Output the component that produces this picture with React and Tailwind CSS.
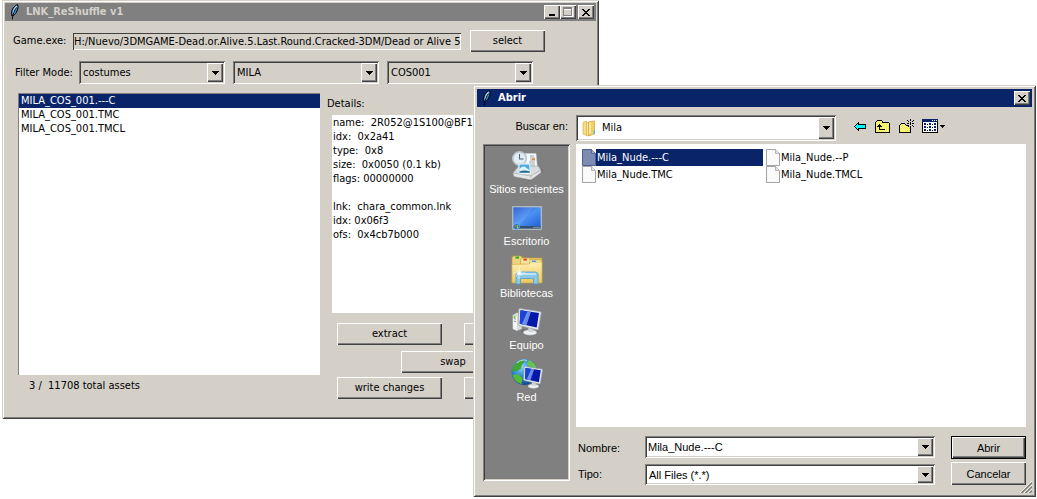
import React, { useState } from "react";

const TAHOMA = "font-['DejaVu_Sans_Condensed','Noto_Sans',sans-serif]";
const SHELL = "font-['Liberation_Sans',Arial,sans-serif]";

const RAISED =
  "bg-[#d4d0c8] shadow-[inset_1px_1px_0_#ffffff,inset_-1px_-1px_0_#404040,inset_-2px_-2px_0_#808080]";
const SUNKEN =
  "shadow-[inset_1px_1px_0_#808080,inset_-1px_-1px_0_#ffffff,inset_2px_2px_0_#404040,inset_-2px_-2px_0_#d4d0c8]";
const FRAME =
  "bg-[#d4d0c8] shadow-[inset_1px_1px_0_#d4d0c8,inset_-1px_-1px_0_#404040,inset_2px_2px_0_#ffffff,inset_-2px_-2px_0_#808080]";

const PALETTE = { K: "#000000", C: "#00ffff", Y: "#f8ee3c", W: "#f6f2a8", N: "#0a246a", H: "#ffffff", G: "#808080" };

function PixelIcon({ rows, className = "" }) {
  return (
    <svg
      width={rows[0].length}
      height={rows.length}
      viewBox={`0 0 ${rows[0].length} ${rows.length}`}
      shapeRendering="crispEdges"
      className={className}
      aria-hidden="true"
    >
      {rows.flatMap((row, y) =>
        [...row].map((c, x) =>
          PALETTE[c] ? <rect key={`${x}-${y}`} x={x} y={y} width="1" height="1" fill={PALETTE[c]} /> : null
        )
      )}
    </svg>
  );
}

const DOWN = ["KKKKKKK", ".KKKKK.", "..KKK..", "...K..."];
const SMALL_DOWN = ["KKKKK", ".KKK.", "..K.."];
const CLOSE = ["KK....KK", ".KK..KK.", "..KKKK..", "...KK...", "..KKKK..", ".KK..KK.", "KK....KK"];
const MINIMIZE = ["......", "......", "......", "......", "......", "KKKKKK", "KKKKKK"];
const MAXIMIZE = [
  "GGGGGGGGG.",
  "GGGGGGGGGH",
  "GHHHHHHHGH",
  "G.......GH",
  "G.......GH",
  "G.......GH",
  "G.......GH",
  "G.......GH",
  "GGGGGGGGGH",
  ".HHHHHHHHH",
];
const BACK = [
  "....K.......",
  "...KK.......",
  "..KCKKKKKKKK",
  ".KCCCCCCCCCK",
  "KCCCCCCCCCCK",
  ".KCCCCCCCCCK",
  "..KCKKKKKKKK",
  "...KK.......",
  "....K.......",
];
const UP = [
  "..KKKKK........",
  ".KYWYWYK.......",
  "KYWYWYWKKKKKKK.",
  "KWYWYWYWYWYWYWK",
  "KYWYKYWYWYWYWYK",
  "KWYKKKYWYWYWYWK",
  "KYKKKKKYWYWYWYK",
  "KWYWKWYWYWYWYWK",
  "KYWYKYWYWYWYWYK",
  "KWYWKKKKKKWYWYK",
  "KYWYWYWYWYWYWYK",
  "KWYWYWYWYWYWYWK",
  "KKKKKKKKKKKKKKK",
];
const NEW_FOLDER = [
  "...........K....",
  "........K..K..K.",
  ".........K...K..",
  "...........K....",
  "..KKKK..KK.K.KK.",
  ".KYWYWK....K....",
  "KYWYWYWKKK...K..",
  "KWYWYWYWYK.K..K.",
  "KYWYWYWYWYWK....",
  "KWYWYWYWYWYK....",
  "KYWYWYWYWYWK....",
  "KWYWYWYWYWYK....",
  "KYWYWYWYWYWK....",
  "KKKKKKKKKKKK....",
];
const VIEWS = [
  "NNNNNNNNNNNNNNNN",
  "NNNNNNNNNNHNHNHN",
  "NNNNNNNNNNNNNNNN",
  "KHHHHHHHHHHHHHHK",
  "KHNNHHHNNHHHNNHK",
  "KHNNHKHNNHKHNNHK",
  "KHHHHHHHHHHHHHHK",
  "KHNNHHHNNHHHNNHK",
  "KHNNHKHNNHKHNNHK",
  "KHHHHHHHHHHHHHHK",
  "KHNNHHHNNHHHNNHK",
  "KHNNHKHNNHKHNNHK",
  "KHHHHHHHHHHHHHHK",
  "KKKKKKKKKKKKKKKK",
];

function Feather() {
  return (
    <svg width="16" height="16" viewBox="0 0 16 16" aria-hidden="true">
      <path d="M10.5 .6C7.8 1.500 5.600 4 5 6.600c-.5 1.800-.7 3.400-.2 5.200l1.500-.3c2-1.200 3-2.700 3.700-4.600C11 4.500 11.500 2.500 10.500 .6Z" fill="#3f86c8" stroke="#000" strokeWidth="1" />
      <path d="M9.800 2C8 3.700 6.700 6 6.200 9" fill="none" stroke="#b9e0fa" strokeWidth="1.300" />
      <path d="M9.500 3.500C7.500 6 5.800 10 5.300 15.500" fill="none" stroke="#000" strokeWidth=".9" />
    </svg>
  );
}

function FolderIcon() {
  return (
    <svg width="15" height="17" viewBox="0 0 15 17" aria-hidden="true">
      <path d="M1 2.500 4.500 1v14.500L1 14Z" fill="#f5dd80" stroke="#d5b048" strokeWidth=".7" />
      <path d="M4.500 2.500h4V15l-4 .8Z" fill="#f9e9a0" stroke="#d5b048" strokeWidth=".6" />
      <path d="M6.500 1.800 12.500 1v13l-6 2Z" fill="#efd067" stroke="#cda53a" strokeWidth=".7" />
      <path d="M8 2.500v11" stroke="#fff6c8" strokeWidth="1.200" />
      <path d="M11.500 10.500h1.500v3.500h-1.500Z" fill="#62b5e8" />
    </svg>
  );
}

function FileIcon({ selected }) {
  return (
    <svg width="14" height="17" viewBox="0 0 14 17" className="shrink-0" aria-hidden="true">
      <path d="M.5 .5h9L13.500 4.500v12H.5Z" fill={selected ? "#7d8ab2" : "#fafafa"} stroke={selected ? "#4f5f92" : "#a3a3a3"} />
      <path d="M9.500 .5v4h4" fill={selected ? "#a3acc8" : "#e6e6e6"} stroke={selected ? "#5c6a99" : "#b4b4b4"} />
    </svg>
  );
}

function RecentIcon() {
  return (
    <svg width="32" height="32" viewBox="0 0 32 32" aria-hidden="true">
      <path d="M8 28 29 18l3 2-12 11Z" fill="#444" opacity=".45" />
      <path d="M12 3.500h13l1.500 15H14Z" fill="#f7fafc" stroke="#c4ccd2" strokeWidth=".6" />
      <path d="M19 6h4M19 8h5M19 10h2M18 12h6M19 14h5M19 16h5" stroke="#8794a2" strokeWidth=".8" />
      <path d="M21 8.500h3v2h-3Z" fill="#d98c3c" />
      <circle cx="8.500" cy="8.500" r="6.800" fill="#dfe9ef" stroke="#b4c1ca" strokeWidth="1.400" />
      <circle cx="8.500" cy="8.500" r="5.200" fill="#e4edf2" />
      <path d="M8.500 4v5h4" fill="none" stroke="#52677a" strokeWidth="1.100" />
      <path d="M2 23 7 17l20-1 3 4-10 7-17-2Z" fill="#d9dcde" stroke="#a5a9ac" strokeWidth=".6" />
      <path d="M7.500 13.500h11.500l1 10.500-12.500 .5Z" fill="#fff" stroke="#ccd6dc" strokeWidth=".5" />
      <path d="M8.500 14.500h9.700l.7 8.200H8.500Z" fill="#4aa9e6" />
      <path d="M8.500 19c3-3 5-3 7-1l3 2 .4 2.700H8.500Z" fill="#e2f2fb" />
      <path d="M8.500 21.500c4-1.500 7-1 10.300 0v1.200H8.500Z" fill="#1f6f93" />
      <path d="M2 23 20 26l10-6v2.500L20 30 3 26.500Z" fill="#e4e6e7" stroke="#9fa3a6" strokeWidth=".6" />
      <path d="M20 26v3.500" stroke="#b5b8ba" strokeWidth=".8" />
    </svg>
  );
}

function DesktopIcon() {
  return (
    <svg width="32" height="32" viewBox="0 0 32 32" aria-hidden="true">
      <defs>
        <linearGradient id="desk" x1="0" y1="0" x2="1" y2="1">
          <stop offset="0" stopColor="#1d56d0" />
          <stop offset=".5" stopColor="#4a92f2" />
          <stop offset="1" stopColor="#2260d6" />
        </linearGradient>
      </defs>
      <rect x="1" y="4" width="30" height="24" fill="#c3cbd2" stroke="#7c8894" strokeWidth=".6" />
      <rect x="2.300" y="5.300" width="27.400" height="19.200" fill="url(#desk)" />
      <path d="M2.300 5.300h20L8 24.500H2.300Z" fill="#fff" opacity=".1" />
      <rect x="2.300" y="24" width="27.400" height="2.700" fill="#33506f" />
      <path d="M22 25.300h7" stroke="#8ca7c7" strokeWidth=".8" />
      <circle cx="5.500" cy="24.500" r="3" fill="#1473c0" stroke="#9cd0ee" strokeWidth=".5" />
      <path d="M3.800 23h1.500v1.500H3.800Z" fill="#ef6334" />
      <path d="M5.700 23h1.500v1.500H5.700Z" fill="#8ecb3c" />
      <path d="M5.700 24.800h1.500v1.400H5.700Z" fill="#fbd349" />
    </svg>
  );
}

function LibrariesIcon() {
  return (
    <svg width="32" height="32" viewBox="0 0 32 32" aria-hidden="true">
      <defs>
        <linearGradient id="lib" x1="0" y1="0" x2="0" y2="1">
          <stop offset="0" stopColor="#fdf0b2" />
          <stop offset="1" stopColor="#ecc75a" />
        </linearGradient>
      </defs>
      <path d="M1 28V3.500L2.500 2H10l1.500 2H31v24Z" fill="#efd27a" stroke="#bd9b3c" strokeWidth=".7" />
      <path d="M4.500 2.600H8v2H4.500Z" fill="#21b321" />
      <path d="M9.500 10V5.500L11 4h7l1.500 2H31v6Z" fill="#f7e39b" stroke="#bd9b3c" strokeWidth=".6" />
      <path d="M12.500 4.600h3.300v2h-3.300Z" fill="#df4421" />
      <path d="M18.500 12V7.500L20 6h10l1 2v6Z" fill="#fbedb4" stroke="#bd9b3c" strokeWidth=".6" />
      <path d="M21 6.700h4v2h-4Z" fill="#2291e2" />
      <path d="M1 29V10.500l17-.5 2-2h11v21Z" fill="url(#lib)" stroke="#cfaa47" strokeWidth=".6" />
      <path d="M5 30V19.500L7.500 18h17l2.500 1.500V30h-4.500v-5.500h-13V30Z" fill="#8cc9e9" stroke="#4d9fca" strokeWidth=".8" />
      <path d="M7 20h18" stroke="#e4f6ff" strokeWidth="1.200" />
      <path d="M8 13v12M2.500 19h12M5 16l6 6M11 16l-6 6" stroke="#fff" strokeWidth=".7" />
      <circle cx="8.200" cy="19" r="1.700" fill="#fff" />
    </svg>
  );
}

function Monitor() {
  return (
    <g>
      <path d="M10 24c4-2 15-1 18 1-1 3-6 5-10 5s-8-2-8-6Z" fill="#555" opacity=".35" />
      <ellipse cx="19" cy="26.500" rx="6.800" ry="2.700" fill="#eef1f3" stroke="#a6abaf" strokeWidth=".6" />
      <path d="M17 19h5l.5 7h-5Z" fill="#d0d5d8" />
      <path d="M9 2.500 29 5.500c1 .2 1.300 .7 1.200 1.500L27.500 23c-.2 .8-.7 1-1.500 .9L8 19.500c-.8-.2-1-.7-.9-1.500L7.800 3.500c0-.7 .5-1.100 1.200-1Z" fill="#e4e8eb" stroke="#989fa5" strokeWidth=".7" />
      <path d="M9.500 4.300 28 7l-2.300 14.500-17-3.800Z" fill="#0519a8" />
      <path d="M9.500 4.300 18 5.500 13 18.700l-4.300-1Z" fill="#1a43d6" />
      <path d="M16.500 5.300 20 5.800 15.500 19.200 11 18.200Z" fill="#8eacf8" opacity=".75" />
    </g>
  );
}

function ComputerIcon() {
  return (
    <svg width="32" height="32" viewBox="0 0 32 32" aria-hidden="true">
      <path d="M1.500 9 6 6.500 11 8v15l-5 2-4.500-2Z" fill="#d9dde0" stroke="#8b9196" strokeWidth=".6" />
      <path d="M2 9.200 6 10.500v14L2 22.700Z" fill="#f3f5f6" />
      <path d="M2.800 12.500 5 13.200M2.800 15 5 15.700" stroke="#747b82" strokeWidth=".8" />
      <circle cx="3.500" cy="10.900" r="1.100" fill="#65d61e" />
      <Monitor />
    </svg>
  );
}

function NetworkIcon() {
  return (
    <svg width="32" height="32" viewBox="0 0 32 32" aria-hidden="true">
      <defs>
        <radialGradient id="globe" cx=".4" cy=".3" r=".75">
          <stop offset="0" stopColor="#8ad4fa" />
          <stop offset=".5" stopColor="#2d86d2" />
          <stop offset="1" stopColor="#0d3f8c" />
        </radialGradient>
      </defs>
      <circle cx="13.500" cy="14" r="13" fill="url(#globe)" />
      <path d="M3 7c3-3 5-5 9-5.500l2 2-3 3-1 4-5 3-4-1C1.300 10.500 2 8.500 3 7Z" fill="#44a532" />
      <path d="M1.500 17l5-1 5 4-1 6.200C5.500 24.500 2.500 21.500 1.500 17Z" fill="#55bb35" />
      <path d="M18 2c4 1.500 7 5 8 8.500l-4-1-4-1-2-3Z" fill="#6cc448" />
      <path d="M6 5c3-3 7-3.500 10-2.500" fill="none" stroke="#d9f4ff" strokeWidth="1" opacity=".8" />
      <g transform="translate(6.800 6.500) scale(.82)">
        <Monitor />
      </g>
    </svg>
  );
}

function CaptionButton({ label, rows, className = "" }) {
  return (
    <button type="button" aria-label={label} className={`flex h-[14px] w-4 items-center justify-center ${RAISED} ${className}`}>
      <PixelIcon rows={rows} />
    </button>
  );
}

function PushButton({ children, label, className = "" }) {
  return (
    <button type="button" aria-label={label} className={`shrink-0 px-2 ${RAISED} ${className}`}>
      {children}
    </button>
  );
}

function Combo({ id, label, options, className = "", textClass = "pl-[2px]", icon = null }) {
  return (
    <div className={`relative p-[2px] ${SUNKEN} ${className}`}>
      <select id={id} aria-label={label} className={`h-full w-full appearance-none bg-transparent pr-5 outline-none ${textClass}`}>
        {options.map((o) => (
          <option key={o}>{o}</option>
        ))}
      </select>
      {icon && <span className="pointer-events-none absolute inset-y-0 left-[6px] flex items-center">{icon}</span>}
      <span className={`pointer-events-none absolute inset-y-[2px] right-[2px] flex w-4 items-center justify-center ${RAISED}`}>
        <PixelIcon rows={DOWN} />
      </span>
    </div>
  );
}

const ASSETS = ["MILA_COS_001.---C", "MILA_COS_001.TMC", "MILA_COS_001.TMCL"];
const DETAILS = `name:  2R052@1S100@BF1M
idx:  0x2a41
type:  0x8
size:  0x0050 (0.1 kb)
flags: 00000000

lnk:  chara_common.lnk
idx: 0x06f3
ofs:  0x4cb7b000`;

function ReShuffleWindow() {
  const [picked, setPicked] = useState(ASSETS[0]);
  return (
    <section aria-label="LNK_ReShuffle v1" className={`absolute top-0 left-[2px] w-[597px] p-[3px] ${FRAME} ${TAHOMA}`}>
      <header className="flex h-[18px] items-center bg-[#808080] pr-[2px] pl-[2px] text-[#d4d0c8]">
        <Feather />
        <h1 className="ml-[3px] flex-1 font-bold">LNK_ReShuffle v1</h1>
        <CaptionButton label="Minimize" rows={MINIMIZE} />
        <CaptionButton label="Maximize" rows={MAXIMIZE} />
        <CaptionButton label="Close" rows={CLOSE} className="ml-[2px]" />
      </header>

      <div className="flex flex-col gap-[9px] pt-[9px] pb-[17px]">
        <div className="flex items-center pl-2">
          <label htmlFor="exe" className="w-[60px]">Game.exe:</label>
          <input
            id="exe"
            readOnly
            defaultValue="H:/Nuevo/3DMGAME-Dead.or.Alive.5.Last.Round.Cracked-3DM/Dead or Alive 5"
            className="h-[17px] w-[388px] bg-[#d4d0c8] px-px shadow-[inset_1px_1px_0_#404040,inset_-1px_-1px_0_#ffffff] outline-none"
          />
          <PushButton className="ml-[9px] h-[22px] w-[75px]">select</PushButton>
        </div>

        <div className="flex items-center gap-2 pl-[10px]">
          <label htmlFor="mode" className="w-14">Filter&nbsp;Mode:</label>
          <Combo id="mode" options={["costumes"]} className="h-[23px] w-[146px]" />
          <Combo id="character" label="Character" options={["MILA"]} className="h-[23px] w-[146px]" />
          <Combo id="costume" label="Costume" options={["COS001"]} className="h-[23px] w-[146px]" />
        </div>

        <div className="flex pl-[13px]">
          <div className="flex w-[302px] flex-col">
            <ul className="h-[282px] border-t border-l border-[#808080] bg-white">
              {ASSETS.map((name) => (
                <li key={name}>
                  <button
                    type="button"
                    onClick={() => setPicked(name)}
                    className={`block w-full pl-[2px] text-left ${picked === name ? "bg-[#0a246a] text-white" : ""}`}
                  >
                    {name}
                  </button>
                </li>
              ))}
            </ul>
            <p className="mt-1 ml-[11px] whitespace-pre">3 /  11708 total assets</p>
          </div>

          <div className="ml-[7px] flex w-[242px] flex-col pt-1">
            <label htmlFor="details">Details:</label>
            <textarea
              id="details"
              readOnly
              defaultValue={DETAILS}
              className="mt-1 ml-[5px] block h-[198px] resize-none overflow-hidden bg-white pt-px pl-px whitespace-pre outline-none"
            />
            <div className="mt-[10px] ml-[10px] flex justify-between">
              <PushButton className="h-[22px] w-[105px]">extract</PushButton>
              <PushButton label="Inject" className="h-[22px] w-[105px]" />
            </div>
            <div className="mt-[6px] ml-[10px] flex justify-center">
              <PushButton className="h-[22px] w-[105px]">swap</PushButton>
            </div>
            <div className="mt-1 ml-[10px] flex justify-between">
              <PushButton className="h-[22px] w-[105px]">write changes</PushButton>
              <PushButton label="Reset" className="h-[22px] w-[105px]" />
            </div>
          </div>
        </div>
      </div>
    </section>
  );
}

const PLACES = [
  ["Sitios recientes", RecentIcon],
  ["Escritorio", DesktopIcon],
  ["Bibliotecas", LibrariesIcon],
  ["Equipo", ComputerIcon],
  ["Red", NetworkIcon],
];
const FILES = ["Mila_Nude.---C", "Mila_Nude.--P", "Mila_Nude.TMC", "Mila_Nude.TMCL"];

function OpenDialog() {
  const [file, setFile] = useState(FILES[0]);
  return (
    <section role="dialog" aria-label="Abrir" className={`absolute top-[85px] right-px left-[473px] p-1 ${FRAME} ${SHELL}`}>
      <header className={`flex h-[18px] items-center bg-[#0a246a] pr-[2px] pl-[2px] text-white ${TAHOMA}`}>
        <Feather />
        <h2 className="ml-[3px] flex-1 font-bold">Abrir</h2>
        <CaptionButton label="Cerrar" rows={CLOSE} />
      </header>

      <div className="grid grid-cols-[87px_1fr] gap-x-[6px] gap-y-[3px] px-[6px] pt-2 pb-2">
        <label htmlFor="folder" className="self-center pr-[2px] pb-1 text-right">Buscar en:</label>
        <div className="flex items-center">
          <Combo
            id="folder"
            options={["Mila"]}
            icon={<FolderIcon />}
            textClass={`pl-6 ${TAHOMA}`}
            className="h-[26px] w-[260px] bg-white"
          />
          <div className="ml-[18px] flex items-center gap-[9px] pb-1">
            <button type="button" aria-label="Atrás"><PixelIcon rows={BACK} /></button>
            <button type="button" aria-label="Subir un nivel"><PixelIcon rows={UP} /></button>
            <button type="button" aria-label="Crear nueva carpeta"><PixelIcon rows={NEW_FOLDER} /></button>
            <button type="button" aria-label="Vistas" className="-ml-[2px] flex items-center gap-[2px]">
              <PixelIcon rows={VIEWS} />
              <PixelIcon rows={SMALL_DOWN} />
            </button>
          </div>
        </div>

        <nav className={`mb-1 flex flex-col gap-[6px] bg-[#808080] pt-[6px] text-white ${SUNKEN}`}>
          {PLACES.map(([name, Icon]) => (
            <a key={name} href="#" className="flex flex-col items-center whitespace-nowrap">
              <Icon />
              {name}
            </a>
          ))}
        </nav>

        <div className="flex flex-col">
          <ul className={`grid h-[283px] grid-cols-[184px_184px] content-start bg-white py-[5px] pl-[6px] ${TAHOMA}`}>
            {FILES.map((name) => (
              <li key={name}>
                <button type="button" onClick={() => setFile(name)} className="flex h-[17px] w-[181px] items-center text-left">
                  <FileIcon selected={file === name} />
                  <span className={`flex h-full flex-1 items-center pl-px ${file === name ? "bg-[#0a246a] text-white" : ""}`}>
                    {name}
                  </span>
                </button>
              </li>
            ))}
          </ul>

          <div className="mt-[9px] grid grid-cols-[67px_1fr_75px] gap-y-[3px] pl-[2px]">
            <label htmlFor="name" className="self-center">Nombre:</label>
            <div className={`mr-4 flex h-[22px] bg-white p-[2px] ${SUNKEN}`}>
              <input
                id="name"
                value={file}
                onChange={(e) => setFile(e.target.value)}
                className="min-w-0 flex-1 bg-transparent pl-px outline-none"
              />
              <button type="button" aria-label="Nombres recientes" className={`flex w-4 items-center justify-center ${RAISED}`}>
                <PixelIcon rows={DOWN} />
              </button>
            </div>
            <PushButton className="h-[23px] border border-black">Abrir</PushButton>

            <label htmlFor="type" className="self-center">Tipo:</label>
            <Combo id="type" options={["All Files (*.*)"]} textClass="pl-[2px]" className="mr-4 h-[21px] self-end bg-white" />
            <PushButton className="h-[23px]">Cancelar</PushButton>
          </div>
        </div>
      </div>

      <svg width="12" height="12" viewBox="0 0 12 12" className="absolute right-1 bottom-1" aria-hidden="true">
        <path d="M0 12 12 0M4 12 12 4M8 12 12 8" stroke="#fff" />
        <path d="M1.500 12 12 1.500M5.500 12 12 5.500M9.500 12 12 9.500" stroke="#808080" strokeWidth="1.600" />
      </svg>
    </section>
  );
}

export default function App() {
  return (
    <main className="relative min-h-screen overflow-hidden bg-white text-[11px] leading-[14px] text-black">
      <ReShuffleWindow />
      <OpenDialog />
    </main>
  );
}
